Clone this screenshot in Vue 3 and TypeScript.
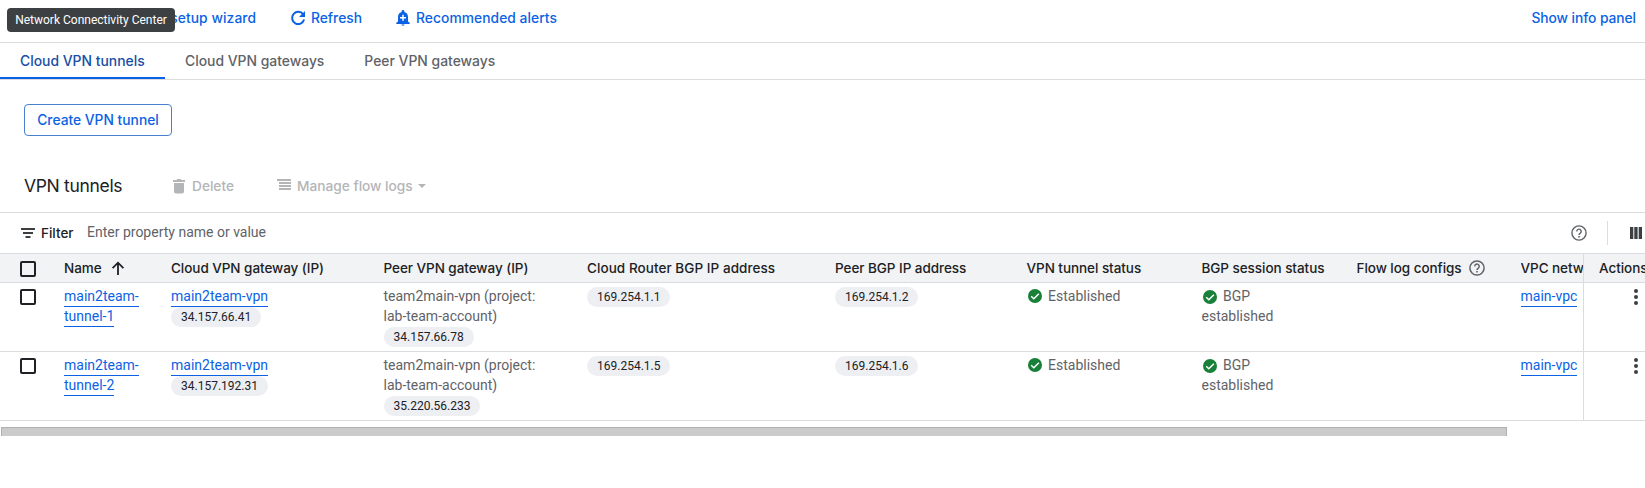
<script setup lang="ts">
interface Tunnel {
  name: string
  gatewayIp: string
  peerIp: string
  routerBgp: string
  peerBgp: string
}

const tabs = ['Cloud VPN tunnels', 'Cloud VPN gateways', 'Peer VPN gateways']

const tunnels: Tunnel[] = [
  { name: 'main2team-tunnel-1', gatewayIp: '34.157.66.41', peerIp: '34.157.66.78', routerBgp: '169.254.1.1', peerBgp: '169.254.1.2' },
  { name: 'main2team-tunnel-2', gatewayIp: '34.157.192.31', peerIp: '35.220.56.233', routerBgp: '169.254.1.5', peerBgp: '169.254.1.6' },
]
</script>

<template>
  <div class="page">
    <header class="toolbar">
      <a class="action wizard">VPN setup wizard</a>
      <a class="action refresh">
        <svg width="18" height="18" viewBox="0 0 18 18"><path d="M14.2 5.4A6.1 6.1 0 1 0 15.1 10.6" fill="none" stroke="currentColor" stroke-width="2" /><path d="M16 2v6h-6z" fill="currentColor" /></svg>
        <span>Refresh</span>
      </a>
      <a class="action alerts">
        <svg width="16" height="18" viewBox="0 0 16 18"><path fill="currentColor" d="M8 1c.8 0 1.4.6 1.4 1.4v.5C11.8 3.500 13 5.500 13 8v4.500l1.700 1.300V15H1.300v-1.200L3 12.500V8c0-2.500 1.200-4.500 3.600-5.100v-.5C6.600 1.600 7.200 1 8 1z" /><path fill="currentColor" opacity=".7" d="M6.400 15.300h3.200a1.600 1.600 0 0 1-3.200 0z" /><path d="M8 5.700v6M5 8.700h6" stroke="#fff" stroke-width="1.500" /></svg>
        <span>Recommended alerts</span>
      </a>
      <a class="action info">Show info panel</a>
      <div class="tooltip">Network Connectivity Center</div>
    </header>

    <nav class="tabs">
      <a v-for="(tab, i) in tabs" :key="tab" class="tab" :class="{ active: i === 0 }">{{ tab }}</a>
    </nav>

    <section class="create-row">
      <button class="create">Create VPN tunnel</button>
    </section>

    <section class="title-row">
      <h2>VPN tunnels</h2>
      <span class="disabled delete">
        <svg width="12" height="15" viewBox="0 0 12 15"><path fill="currentColor" d="M0 1h3.500L4.300 0h3.400l.8 1H12v2H0zM1 4h10v8.500A1.900 1.900 0 0 1 9.100 14.400H2.900A1.900 1.900 0 0 1 1 12.500z" /></svg>
        Delete
      </span>
      <span class="disabled logs">
        <svg width="14" height="11" viewBox="0 0 14 11"><path fill="currentColor" d="M0 0h14v2H0zM2 3h12v2H2zM2 6h12v2H2zM2 9h12v2H2z" /></svg>
        <span>Manage flow logs</span>
        <i class="caret"></i>
      </span>
    </section>

    <section class="filter">
      <svg width="14" height="10" viewBox="0 0 14 10"><path fill="#3c4043" d="M0 0h14v2H0zM2 4h10v2H2zM4.500 8h5v2h-5z" /></svg>
      <span class="filter-label">Filter</span>
      <span class="placeholder">Enter property name or value</span>
      <svg class="filter-help" width="16" height="16" viewBox="0 0 16 16"><circle cx="8" cy="8" r="7.100" fill="none" stroke="#5f6368" stroke-width="1.400" /><path d="M5.800 6.400a2.200 2.200 0 1 1 3.500 1.700C8.400 8.700 8 9 8 10" fill="none" stroke="#5f6368" stroke-width="1.400" /><path d="M7.200 11.100h1.600v1.500H7.200z" fill="#5f6368" /></svg>
      <i class="separator"></i>
      <svg class="columns" width="12" height="12" viewBox="0 0 12 12"><path fill="#3c4043" d="M0 0h3.300v12H0zM4.300 0h3.300v12H4.300zM8.700 0H12v12H8.700z" /></svg>
    </section>

    <div class="grid head">
      <div class="check"><i class="box"></i></div>
      <div class="name">
        Name
        <svg width="14" height="14" viewBox="0 0 14 14"><path d="M7 14V1.800M1.600 7.100 7 1.700l5.400 5.400" fill="none" stroke="#202124" stroke-width="1.800" /></svg>
      </div>
      <div>Cloud VPN gateway (IP)</div>
      <div>Peer VPN gateway (IP)</div>
      <div class="router">Cloud Router BGP IP address</div>
      <div>Peer BGP IP address</div>
      <div>VPN tunnel status</div>
      <div>BGP session status</div>
      <div class="flow">
        Flow log configs
        <svg width="16" height="16" viewBox="0 0 16 16"><circle cx="8" cy="8" r="7.100" fill="none" stroke="#5f6368" stroke-width="1.500" /><path d="M5.800 6.400a2.200 2.200 0 1 1 3.500 1.700C8.400 8.700 8 9 8 10" fill="none" stroke="#5f6368" stroke-width="1.500" /><path d="M7.200 11.100h1.600v1.500H7.200z" fill="#5f6368" /></svg>
      </div>
      <div class="vpc">VPC network</div>
      <div class="actions">Actions</div>
    </div>

    <div v-for="t in tunnels" :key="t.name" class="grid row">
      <div class="check"><i class="box"></i></div>
      <div class="text name-cell"><a class="link">{{ t.name }}</a></div>
      <div class="text">
        <div class="line"><a class="link">main2team-vpn</a></div>
        <span class="chip below">{{ t.gatewayIp }}</span>
      </div>
      <div class="text peer">
        team2main-vpn (project: lab-team-account)
        <span class="chip below">{{ t.peerIp }}</span>
      </div>
      <div><span class="chip">{{ t.routerBgp }}</span></div>
      <div><span class="chip">{{ t.peerBgp }}</span></div>
      <div class="text status">
        <svg width="14" height="14" viewBox="0 0 14 14"><circle cx="7" cy="7" r="7" fill="#188038" /><path d="M3.200 7.200 5.800 9.800 10.900 4.700" fill="none" stroke="#fff" stroke-width="1.500" /></svg>Established
      </div>
      <div class="text status session">
        <svg width="14" height="14" viewBox="0 0 14 14"><circle cx="7" cy="7" r="7" fill="#188038" /><path d="M3.200 7.200 5.800 9.800 10.900 4.700" fill="none" stroke="#fff" stroke-width="1.500" /></svg>BGP established
      </div>
      <div></div>
      <div class="text vpc"><a class="link">main-vpc</a></div>
      <div class="actions menu">
        <svg width="4" height="16" viewBox="0 0 4 16"><circle cx="2" cy="2" r="2" /><circle cx="2" cy="8" r="2" /><circle cx="2" cy="14" r="2" /></svg>
      </div>
    </div>

    <div class="scroll"><div class="thumb"></div></div>
  </div>
</template>

<style>
body {
  margin: 0;
  background: #fff;
}
</style>

<style scoped>
.page {
  width: 100%;
  height: 488px;
  overflow: hidden;
  background: #fff;
  font: 400 14px/20px Roboto, 'Liberation Sans', sans-serif;
  color: #5f6368;
}
.page * {
  box-sizing: border-box;
}
svg {
  display: block;
  flex: none;
}
.toolbar {
  position: relative;
  display: flex;
  align-items: center;
  height: 43px;
  padding: 0 9px 7px 137px;
  border-bottom: 1px solid #dadce0;
  font: 500 13.8px/20px Inter, sans-serif;
  color: #0b62e4;
}
.action {
  display: flex;
  align-items: center;
  white-space: nowrap;
}
.wizard {
  width: 152px;
  letter-spacing: 0.1px;
}
.refresh {
  gap: 4px;
  width: 107px;
}
.alerts {
  gap: 5px;
  letter-spacing: 0.06px;
}
.alerts svg {
  margin-left: -1px;
}
.info {
  margin-left: auto;
  letter-spacing: -0.06px;
}
.tooltip {
  position: absolute;
  left: 7px;
  top: 8px;
  width: 168px;
  height: 24px;
  border-radius: 4px;
  background: #3c4043;
  color: #fff;
  font: 400 12px/24px Roboto, sans-serif;
  text-align: center;
}
.tabs {
  display: flex;
  height: 37px;
  border-bottom: 1px solid #dadce0;
}
.tab {
  height: 36px;
  padding: 0 20px;
  font: 500 13.9px/36px Inter, sans-serif;
  color: #5f6368;
}
.active {
  width: 165px;
  color: #174ea6;
  border-bottom: 2px solid #0b62e4;
}
.create-row {
  height: 80px;
  padding: 24px 24px 0;
}
.create {
  display: block;
  width: 148px;
  height: 32px;
  padding: 0;
  border: 1px solid #4a80d0;
  border-radius: 4px;
  background: #fff;
  color: #0b62e4;
  font: 500 13.8px/30px Inter, sans-serif;
}
.title-row {
  display: flex;
  align-items: center;
  height: 52px;
  padding: 0 24px;
}
h2 {
  width: 149px;
  margin: 0;
  font: 400 17.5px/24px Inter, sans-serif;
  letter-spacing: -0.32px;
  color: #202124;
}
.disabled {
  display: flex;
  align-items: center;
  font: 500 13.7px/20px Inter, sans-serif;
  color: #b4b5b7;
}
.delete {
  gap: 7px;
  width: 104px;
}
.logs svg {
  margin: 0 6px 3px 0;
}
.caret {
  margin-left: 5px;
  border: 4px solid transparent;
  border-top-color: currentColor;
  border-bottom: 0;
}
.filter {
  display: flex;
  align-items: center;
  height: 41px;
  padding-left: 21px;
  border-top: 1px solid #dadce0;
}
.filter-label {
  width: 46px;
  margin-left: 6px;
  font: 500 13.5px/20px Inter, sans-serif;
  color: #202124;
}
.placeholder {
  flex: 1;
  padding-bottom: 2px;
}
.separator {
  width: 1px;
  height: 24px;
  margin: 0 22px 0 20px;
  background: #dadce0;
}
.columns {
  margin-right: 3px;
}
.grid {
  display: grid;
  grid-template-columns: 64px 107px 212.5px 203.5px 248px 191.500px 175px 155px 164px 62.500px 62px;
  border-bottom: 1px solid #dadce0;
}
.head {
  height: 30px;
  border-top: 1px solid #dadce0;
  background: #f1f3f4;
  color: #202124;
  font: 500 13.5px/28px Inter, sans-serif;
  letter-spacing: -0.05px;
  white-space: nowrap;
}
.router {
  letter-spacing: 0.06px;
}
.row {
  height: 69px;
}
.row > div {
  padding-top: 4px;
}
.row > .text {
  padding-top: 3px;
}
.check {
  padding: 6px 0 0 20px;
}
.row > .check {
  padding-top: 6px;
}
.box {
  display: block;
  width: 16px;
  height: 16px;
  border: 2px solid #202124;
  border-radius: 2px;
}
.head .check {
  padding-top: 7px;
}
.name {
  display: flex;
  align-items: center;
  gap: 9px;
}
.flow {
  display: flex;
  align-items: center;
  gap: 7px;
}
.name-cell {
  width: 85px;
}
.link {
  padding-bottom: 2px;
  border-bottom: 1px solid #0b62e4;
  color: #0b62e4;
}
.line {
  height: 20px;
}
.chip {
  display: block;
  width: fit-content;
  height: 20px;
  padding: 0 10px;
  border-radius: 10px;
  background: #eeeff3;
  color: #202124;
  font-size: 12px;
}
.below {
  margin-top: 1px;
}
.peer {
  width: 165px;
}
.status svg {
  display: inline-block;
  margin: 0 6px 0 1.500px;
  vertical-align: -2px;
}
.session {
  width: 100px;
}
.session svg {
  vertical-align: -3px;
}
.vpc {
  overflow: hidden;
  white-space: nowrap;
}
.actions {
  padding-left: 15px;
  border-left: 1px solid #dadce0;
  overflow: hidden;
}
.row > .menu {
  padding: 6px 0 0 50px;
  fill: #3c4043;
}
.scroll {
  padding: 6px 0 0 1px;
}
.thumb {
  width: 1506px;
  height: 9px;
  border: 1px solid #b0b0b0;
  border-bottom: 0;
  background: #cbcbcb;
}
</style>
